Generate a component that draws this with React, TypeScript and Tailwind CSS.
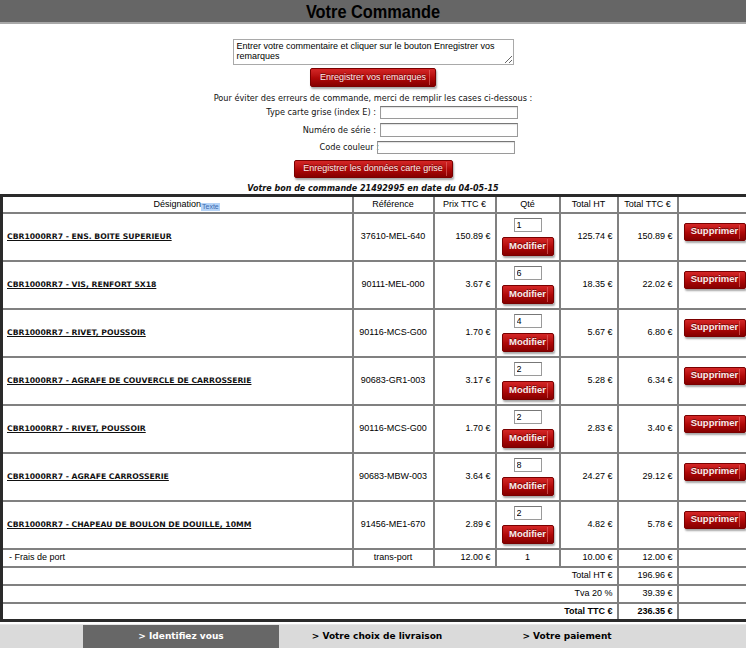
import React from "react"

type Line = { des: string; ref: string; prix: string; qte: string; ht: string; ttc: string }

const lines: Line[] = [
  { des: "CBR1000RR7 - ENS. BOITE SUPERIEUR", ref: "37610-MEL-640", prix: "150.89 €", qte: "1", ht: "125.74 €", ttc: "150.89 €" },
  { des: "CBR1000RR7 - VIS, RENFORT 5X18", ref: "90111-MEL-000", prix: "3.67 €", qte: "6", ht: "18.35 €", ttc: "22.02 €" },
  { des: "CBR1000RR7 - RIVET, POUSSOIR", ref: "90116-MCS-G00", prix: "1.70 €", qte: "4", ht: "5.67 €", ttc: "6.80 €" },
  { des: "CBR1000RR7 - AGRAFE DE COUVERCLE DE CARROSSERIE", ref: "90683-GR1-003", prix: "3.17 €", qte: "2", ht: "5.28 €", ttc: "6.34 €" },
  { des: "CBR1000RR7 - RIVET, POUSSOIR", ref: "90116-MCS-G00", prix: "1.70 €", qte: "2", ht: "2.83 €", ttc: "3.40 €" },
  { des: "CBR1000RR7 - AGRAFE CARROSSERIE", ref: "90683-MBW-003", prix: "3.64 €", qte: "8", ht: "24.27 €", ttc: "29.12 €" },
  { des: "CBR1000RR7 - CHAPEAU DE BOULON DE DOUILLE, 10MM", ref: "91456-ME1-670", prix: "2.89 €", qte: "2", ht: "4.82 €", ttc: "5.78 €" },
]

function RedButton({ label, className }: { label: string; className: string }) {
  return (
    <button
      type="button"
      className={`relative rounded-[2px] border border-[#7a0000] bg-gradient-to-b from-[#d42626] via-[#b20909] to-[#860000] text-[#fbeaea] shadow-[1px_2px_2px_rgba(0,0,0,0.35)] [text-shadow:0_-1px_0_rgba(0,0,0,0.45)] font-['Liberation_Sans',Arial,sans-serif] ${className}`}
    >
      {label}
      <span className="absolute right-[5px] top-[1px] bottom-[1px] w-px bg-[#e37070]/60" />
    </button>
  )
}

const cell = "border-2 border-[#808080]"
const verdana = "font-['DejaVu_Sans',Verdana,sans-serif]"

export default function App() {
  return (
    <div className="w-[746px] min-h-[669px] bg-white font-['Liberation_Sans',Arial,sans-serif] text-black">
      <div className="h-[24px] bg-[#666666] border-b-2 border-[#a8a8a8] flex items-center justify-center">
        <h1 className="inline-block scale-x-[0.86] font-bold text-[19px] leading-none text-black">
          Votre Commande
        </h1>
      </div>

      <div className="flex flex-col items-center pt-[15px]">
        <textarea
          defaultValue="Entrer votre commentaire et cliquer sur le bouton Enregistrer vos remarques"
          className="w-[281px] h-[26px] border border-[#a9a9a9] px-[3px] py-[1px] text-[9px] leading-[10px] text-black outline-none"
        />
        <RedButton label="Enregistrer vos remarques" className="mt-[3px] w-[126px] h-[19px] text-[9px]" />

        <p className={`${verdana} mt-[6px] text-[8.2px] leading-[11px] text-[#111]`}>
          Pour éviter des erreurs de commande, merci de remplir les cases ci-dessous :
        </p>
      </div>

      <div className={`${verdana} ml-[262px] mt-[2px] grid grid-cols-[118px_140px] gap-y-[4px] text-[8.2px] text-[#111]`}>
        <label className="text-right pr-[4px] self-center">Type carte grise (index E) :</label>
        <input className="w-[138px] h-[13px] border border-[#9a9a9a] border-t-[#777] shadow-[inset_0_1px_1px_rgba(0,0,0,0.12)]" />
        <label className="text-right pr-[4px] self-center">Numéro de série :</label>
        <input className="w-[138px] h-[14px] border border-[#9a9a9a] border-t-[#777] shadow-[inset_0_1px_1px_rgba(0,0,0,0.12)]" />
        <label className="text-right pr-[1px] self-center">Code couleur :</label>
        <input className="-ml-[3px] w-[138px] h-[13px] border border-[#9a9a9a] border-t-[#777] shadow-[inset_0_1px_1px_rgba(0,0,0,0.12)]" />
      </div>

      <div className="flex flex-col items-center">
        <RedButton label="Enregistrer les données carte grise" className="mt-[6px] w-[159px] h-[18px] text-[9px]" />
        <p className={`${verdana} mt-[5px] text-[8px] leading-[11px] font-bold italic text-[#111]`}>
          Votre bon de commande 21492995 en date du 04-05-15
        </p>
      </div>

      <div className="overflow-hidden">
        <table className="w-[760px] border-collapse border-[3px] border-[#2a2a2a] text-[9px] table-fixed">
          <colgroup>
            <col className="w-[351px]" />
            <col className="w-[81px]" />
            <col className="w-[62px]" />
            <col className="w-[64px]" />
            <col className="w-[58px]" />
            <col className="w-[60px]" />
            <col className="w-[84px]" />
          </colgroup>
          <thead>
            <tr className="h-[17px]">
              <th className={`${cell} font-normal`}>
                <span className="relative">
                  Désignation
                  <span className="absolute left-full top-[4px] bg-[#b5d3f7] px-px text-[7px] leading-[8px] text-[#3b6cb0]">Texte</span>
                </span>
              </th>
              <th className={`${cell} font-normal`}>Référence</th>
              <th className={`${cell} font-normal`}>Prix TTC €</th>
              <th className={`${cell} font-normal`}>Qté</th>
              <th className={`${cell} font-normal`}>Total HT</th>
              <th className={`${cell} font-normal`}>Total TTC €</th>
              <th className={cell}></th>
            </tr>
          </thead>
          <tbody>
            {lines.map((l, i) => (
              <tr key={i} className="h-[48px]">
                <td className={`${cell} pl-[4px]`}>
                  <a className={`${verdana} font-bold text-[7.7px] underline text-[#111]`}>{l.des}</a>
                </td>
                <td className={`${cell} text-center`}>{l.ref}</td>
                <td className={`${cell} text-right pr-[4px]`}>{l.prix}</td>
                <td className={`${cell} text-center`}>
                  <div className="flex flex-col items-center">
                    <input
                      defaultValue={l.qte}
                      className="w-[28px] h-[14px] border border-[#9a9a9a] border-t-[#777] px-[2px] text-[9px] leading-none"
                    />
                    <RedButton label="Modifier" className="mt-[5px] w-[52px] h-[19px] text-[9.5px] font-bold" />
                  </div>
                </td>
                <td className={`${cell} text-right pr-[4px]`}>{l.ht}</td>
                <td className={`${cell} text-right pr-[4px]`}>{l.ttc}</td>
                <td className={`${cell} pl-[5px]`}>
                  <RedButton label="Supprimer" className="mb-[10px] w-[62px] h-[18px] text-[9.5px] font-bold" />
                </td>
              </tr>
            ))}
            <tr className="h-[18px]">
              <td className={`${cell} pl-[6px]`}>- Frais de port</td>
              <td className={`${cell} text-center`}>trans-port</td>
              <td className={`${cell} text-right pr-[4px]`}>12.00 €</td>
              <td className={`${cell} text-center`}>1</td>
              <td className={`${cell} text-right pr-[4px]`}>10.00 €</td>
              <td className={`${cell} text-right pr-[4px]`}>12.00 €</td>
              <td className={cell}></td>
            </tr>
            <tr className="h-[18px]">
              <td colSpan={5} className={`${cell} text-right pr-[4px]`}>Total HT €</td>
              <td className={`${cell} text-right pr-[4px]`}>196.96 €</td>
              <td className={cell}></td>
            </tr>
            <tr className="h-[18px]">
              <td colSpan={5} className={`${cell} text-right pr-[4px]`}>Tva 20 %</td>
              <td className={`${cell} text-right pr-[4px]`}>39.39 €</td>
              <td className={cell}></td>
            </tr>
            <tr className="h-[18px]">
              <td colSpan={5} className={`${cell} text-right pr-[4px] font-bold`}>Total TTC €</td>
              <td className={`${cell} text-right pr-[4px] font-bold`}>236.35 €</td>
              <td className={cell}></td>
            </tr>
          </tbody>
        </table>
      </div>

      <nav className={`${verdana} mt-[2px] h-[24px] bg-[#dadada] border-t border-[#e6e6e6] flex pl-[83px] text-[9px] font-bold`}>
        <div className="w-[196px] flex items-center justify-center bg-[#676767] text-white">&gt; Identifiez vous</div>
        <div className="w-[196px] flex items-center justify-center text-black">&gt; Votre choix de livraison</div>
        <div className="w-[184px] flex items-center justify-center text-black">&gt; Votre paiement</div>
      </nav>
    </div>
  )
}
